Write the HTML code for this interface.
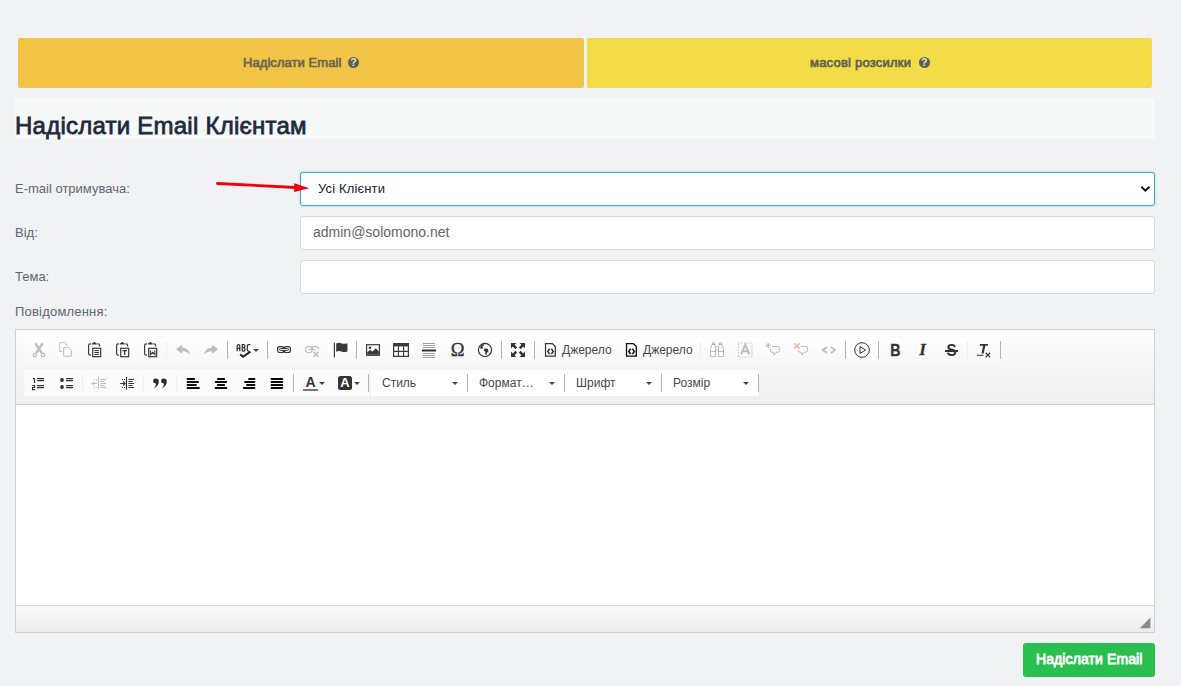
<!DOCTYPE html>
<html lang="uk">
<head>
<meta charset="utf-8">
<title>Надіслати Email Клієнтам</title>
<style>
*{box-sizing:border-box;margin:0;padding:0}
html,body{width:1181px;height:686px;overflow:hidden}
body{background:#f0f2f4;font-family:"Liberation Sans",sans-serif;position:relative;color:#5b6068}
.abs{position:absolute;white-space:nowrap}
.tab{position:absolute;top:38px;height:50px;border-radius:2px}
#tab1{left:18px;width:566px;background:#f1c445}
#tabgap{position:absolute;left:584px;top:38px;width:3px;height:50px;background:#f5f2e7}
#tab2{left:587px;width:565px;background:#f4dc49}
.tabtxt{font-size:13px;font-weight:normal;-webkit-text-stroke:0.7px #6b6850;letter-spacing:.06px;line-height:16px;color:#6b6850}
.qm{position:absolute;width:11px;height:11px}
#band{position:absolute;left:15px;top:98px;width:1140px;height:41px;background:#f7f9f9}
#h1{left:15px;top:111px;font-size:24px;line-height:30px;font-weight:normal;-webkit-text-stroke:0.8px #1f2a3c;letter-spacing:0.24px;color:#1f2a3c}
.lbl{font-size:13px;line-height:16px;color:#60666d}
.inp{position:absolute;left:300px;width:855px;height:34px;background:#fff;border:1px solid #d6d9db;border-radius:3px}
#sel{border:1px solid #3fb0c4;box-shadow:0 0 2px rgba(63,176,196,.6)}
#ed{position:absolute;left:15px;top:329px;width:1140px;height:304px;border:1px solid #cfd2d4;background:#fff}
#tb{position:absolute;left:0;top:0;width:1138px;height:75px;background:linear-gradient(#fdfdfd,#f6f6f6 45%,#efefef);border-bottom:1px solid #d3d3d3}
#bot{position:absolute;left:0;top:275px;width:1138px;height:27px;background:linear-gradient(#fbfbfb,#ececec);border-top:1px solid #d3d3d3}
#btn{position:absolute;left:1023px;top:643px;width:132px;height:34px;background:#2abf4e;border-radius:3px}
#btntxt{left:1036px;top:650px;font-size:14px;line-height:18px;font-weight:normal;-webkit-text-stroke:0.8px #fff;letter-spacing:.1px;color:#fff}

.grp{position:absolute;height:26px;background:rgba(255,255,255,.7)}
#g1{background:linear-gradient(rgba(255,255,255,.8),rgba(255,255,255,.15))}
.sd{position:absolute;width:1px;height:18px;background:#b3b3b3}
.sl{position:absolute;width:1px;height:18px;background:#f0f0f0}
.r1{top:341px}.r2{top:374px}
.ic{position:absolute;width:16px;height:16px;overflow:visible}
.i1{top:342px}.i2{top:375px}
.cb{font-size:12px;line-height:14px;color:#474747;top:376px}
.ar{position:absolute;width:0;height:0;border-left:3px solid transparent;border-right:3px solid transparent;border-top:3px solid #474747}
.dis{opacity:.3}
.qmark{width:11.200px;height:11.200px;border-radius:50%;font-size:10.500px;line-height:11px;text-align:center;font-weight:bold}
</style>
</head>
<body>
<div class="tab" id="tab1"></div>
<div id="tabgap"></div>
<div class="tab" id="tab2"></div>
<div class="abs tabtxt" id="t1" style="left:243px;top:55px">Надіслати Email</div>
<div class="abs tabtxt" id="t2" style="left:810px;top:55px;letter-spacing:.22px;color:#5f6450;-webkit-text-stroke-color:#5f6450">масові розсилки</div>

<div id="band"></div>
<div class="abs" id="h1">Надіслати Email Клієнтам</div>

<div class="abs lbl" id="l1" style="left:15px;top:181px">E-mail отримувача:</div>
<div class="abs lbl" id="l2" style="left:15px;top:225px">Від:</div>
<div class="abs lbl" id="l3" style="left:15px;top:269px">Тема:</div>
<div class="abs lbl" id="l4" style="left:15px;top:304px;letter-spacing:.2px">Повідомлення:</div>

<div class="inp" id="sel" style="top:172px"></div>
<div class="inp" id="in2" style="top:216px"></div>
<div class="inp" id="in3" style="top:260px"></div>
<div class="abs" id="seltxt" style="left:318px;top:181px;letter-spacing:.15px;font-size:13px;line-height:16px;color:#222">Усі Клієнти</div>
<div class="abs" id="fromtxt" style="left:313px;top:223px;font-size:14px;line-height:18px;color:#666">admin@solomono.net</div>

<div id="ed">
 <div id="tb"></div>
 <div id="bot"></div>
</div>


<div id="tbi">
<div class="grp" id="g1" style="left:24px;top:337px;width:977px"></div>
<div class="grp" style="left:24px;top:370px;width:345px"></div><div class="grp" style="left:371px;top:370px;width:388px;background:#fff"></div>
<!-- row 1 separators -->
<div class="sl r1" style="left:166px"></div>
<div class="sd r1" style="left:227px"></div>
<div class="sd r1" style="left:267px"></div>
<div class="sd r1" style="left:356px"></div>
<div class="sd r1" style="left:501px"></div>
<div class="sd r1" style="left:534px"></div>
<div class="sl r1" style="left:700px"></div>
<div class="sd r1" style="left:845px"></div>
<div class="sd r1" style="left:878px"></div>
<div class="sl r1" style="left:967px"></div>
<div class="sd r1" style="left:1000px"></div>
<!-- row 2 separators -->
<div class="sl r2" style="left:82px"></div>
<div class="sl r2" style="left:143px"></div>
<div class="sl r2" style="left:176px"></div>
<div class="sd r2" style="left:293px"></div>
<div class="sd r2" style="left:368px"></div>
<div class="sd r2" style="left:467px"></div>
<div class="sd r2" style="left:564px"></div>
<div class="sd r2" style="left:661px"></div>
<div class="sd r2" style="left:758px"></div>
<!-- labels -->
<div class="abs cb" id="src1" style="left:562px;top:343px">Джерело</div>
<div class="abs cb" id="src2" style="left:643px;top:343px">Джерело</div>
<div class="abs cb" id="c1" style="left:382px">Стиль</div>
<div class="abs cb" id="c2" style="left:479px">Формат…</div>
<div class="abs cb" id="c3" style="left:576px">Шрифт</div>
<div class="abs cb" id="c4" style="left:673px">Розмір</div>
<div class="ar" style="left:452px;top:382px"></div>
<div class="ar" style="left:549px;top:382px"></div>
<div class="ar" style="left:646px;top:382px"></div>
<div class="ar" style="left:743px;top:382px"></div>
<div class="ar" style="left:253px;top:349px"></div>
<div class="ar" style="left:319px;top:382px"></div>
<div class="ar" style="left:354px;top:382px"></div>
<!-- ICONS-BEGIN -->
<!-- row 1 -->
<svg class="ic i1 dis" style="left:31px" viewBox="0 0 16 16"><g fill="none" stroke="#333"><path d="M4.400 1.400L11 11.400M11.600 1.400L5 11.400" stroke-width="2.500"/><circle cx="3.900" cy="13" r="1.700" stroke-width="1.200"/><circle cx="12.100" cy="13" r="1.700" stroke-width="1.200"/></g></svg>
<svg class="ic i1 dis" style="left:59px" viewBox="0 0 16 16"><g fill="none" stroke="#333" stroke-width="1"><path d="M3.200 9.500H.700V.700H6L8.800 3.800"/><path d="M4.700 5.600H9.800L12.400 8.200V14.200H4.700Z"/></g></svg>
<svg class="ic i1" style="left:87px" viewBox="0 0 16 16"><g fill="none" stroke="#3a3a3a" stroke-width="1.2"><path d="M4 1.8H3.2Q1.6 1.8 1.6 3.4V11.6Q1.6 13.2 3.2 13.2H4"/><path d="M10.6 1.8H11.2Q12.6 1.8 12.6 3.4V4.6"/><rect x="5.7" y="6.3" width="8" height="8.4"/><path d="M7.4 8.6H12M7.4 10.5H12M7.4 12.4H12" stroke-width="1"/></g><path d="M4.8 2.6V1.6Q4.8 .9 5.8 .9H6Q6.3 0 7.3 0T8.6 .9H8.8Q9.8 .9 9.8 1.6V2.6Z" fill="#3a3a3a"/></svg>
<svg class="ic i1" style="left:115px" viewBox="0 0 16 16"><g fill="none" stroke="#3a3a3a" stroke-width="1.2"><path d="M4 1.8H3.2Q1.6 1.8 1.6 3.4V11.6Q1.6 13.2 3.2 13.2H4"/><path d="M10.6 1.8H11.2Q12.6 1.8 12.6 3.4V4.6"/><rect x="5.7" y="6.3" width="8" height="8.4"/><path d="M7.4 8.6H12M9.7 8.6V13" stroke-width="1.3"/></g><path d="M4.8 2.6V1.6Q4.8 .9 5.8 .9H6Q6.3 0 7.3 0T8.6 .9H8.8Q9.8 .9 9.8 1.6V2.6Z" fill="#3a3a3a"/></svg>
<svg class="ic i1" style="left:143px" viewBox="0 0 16 16"><g fill="none" stroke="#3a3a3a" stroke-width="1.2"><path d="M4 1.8H3.2Q1.6 1.8 1.6 3.4V11.6Q1.6 13.2 3.2 13.2H4"/><path d="M10.6 1.8H11.2Q12.6 1.8 12.6 3.4V4.6"/><rect x="5.7" y="6.3" width="8" height="8.4"/><path d="M7.5 8.3V12.7L9.7 10.4L11.9 12.7V8.3" stroke-width="1.1"/></g><path d="M4.8 2.6V1.6Q4.8 .9 5.8 .9H6Q6.3 0 7.3 0T8.6 .9H8.8Q9.8 .9 9.8 1.6V2.6Z" fill="#3a3a3a"/></svg>
<svg class="ic i1 dis" style="left:175px" viewBox="0 0 16 16"><path d="M1 7.2L7 2.8V5.6Q13.5 5.6 15 12.8Q12.2 9 7 9.2V11.8Z" fill="#333"/></svg>
<svg class="ic i1 dis" style="left:203px" viewBox="0 0 16 16"><path d="M15 7.2L9 2.8V5.6Q2.500 5.600 1 12.800Q3.800 9 9 9.200V11.800Z" fill="#333"/></svg>
<!-- spell -->
<svg class="ic i1" style="left:235px" viewBox="0 0 16 16"><g fill="none" stroke="#333" stroke-width="1.25"><path d="M2.200 9.200V4Q2.200 2.600 3.500 2.600T4.800 4V9.200M2.200 6.400H4.800"/><path d="M7.200 9.200V2.600H8.600Q9.900 2.600 9.900 4.100T8.600 5.700H7.200M8.600 5.700Q10.100 5.700 10.100 7.400T8.600 9.200H7.200"/><path d="M15.300 2.600H13.600Q12.300 2.600 12.300 4V7.800Q12.300 9.200 13.600 9.200H14"/></g><path d="M5.200 12.200L8 14.800L15.400 9.600" fill="none" stroke="#222" stroke-width="1.9"/></svg>
<!-- link, unlink, anchor -->
<svg class="ic i1" style="left:276px" viewBox="0 0 16 16"><g fill="none" stroke="#333" stroke-width="1.150"><rect x="1.550" y="4.550" width="6.500" height="5.900" rx="2.300"/><rect x="7.950" y="4.550" width="6.500" height="5.900" rx="2.300"/><rect x="3.500" y="6.550" width="9" height="1.900" rx=".950" fill="#fcfcfc" stroke-width="1"/></g></svg>
<svg class="ic i1 dis" style="left:304px" viewBox="0 0 16 16"><g fill="none" stroke="#333" stroke-width="1.150"><rect x="1.550" y="4.550" width="6.500" height="5.900" rx="2.300"/><path d="M8 8.800V6.850Q8 4.550 10.300 4.550H12.200Q14.500 4.550 14.500 6.850V7.600"/><path d="M4 7.500H10.800Q12.400 7.500 12.400 8.800" stroke-width="1"/><path d="M9.600 9.800L14.600 14.800M14.600 9.800L9.600 14.800" stroke-width="1.500"/></g></svg>
<svg class="ic i1" style="left:332px" viewBox="0 0 16 16"><path d="M2.400 .8V15.200" stroke="#3a3a3a" stroke-width="1.200"/><path d="M4.200 1.600Q6.500 .2 9.200 1.300T15.400 1.200V9.400Q12.400 10.700 9.400 9.600T4.200 9.900Z" fill="#3a3a3a"/></svg>
<!-- image table hr omega globe -->
<svg class="ic i1" style="left:365px" viewBox="0 0 16 16"><rect x="1.600" y="2.700" width="12.800" height="10.600" fill="none" stroke="#3a3a3a" stroke-width="1.200"/><circle cx="5" cy="5.800" r="1.300" fill="#3a3a3a"/><path d="M2.200 12.800V10.400L5.200 7.800L7.300 9.800L10.800 6.200L13.800 9.600V12.800Z" fill="#3a3a3a"/></svg>
<svg class="ic i1" style="left:393px" viewBox="0 0 16 16"><rect x=".6" y="1.6" width="14.8" height="12.8" fill="none" stroke="#3a3a3a" stroke-width="1.2"/><rect x="0" y="1" width="16" height="3.4" fill="#3a3a3a"/><path d="M5.4 4V14.400M10.6 4V14.400M0 9.400H16" stroke="#3a3a3a" stroke-width="1.1"/></svg>
<svg class="ic i1" style="left:421px" viewBox="0 0 16 16"><path d="M2 1.500H14M2 3.500H14M2 5.500H14M2 11.500H14M2 13.500H14M2 15.500H14" stroke="#a0a0a0" stroke-width="1"/><path d="M1 8.500H15" stroke="#333" stroke-width="2"/></svg>
<div class="abs" style="left:449px;top:338px;width:17px;text-align:center;font-family:'Liberation Serif','DejaVu Serif',serif;font-size:18.5px;line-height:24px;color:#333;font-weight:normal;-webkit-text-stroke:.35px #333">Ω</div>
<svg class="ic i1" style="left:477px" viewBox="0 0 16 16"><circle cx="8" cy="8" r="6.600" fill="none" stroke="#333" stroke-width="1.200"/><path d="M3.400 4.200Q5 2 7.600 2.200L6.800 3.800L5.200 4.200L6.400 5.400L4.800 6.800L3.200 6.400ZM7.400 6.600L10.800 6.800L11.600 9.200L9.800 11L9.600 13.600L8.200 11.800L8.400 9.800L6.800 8.400Z" fill="#333"/></svg>
<!-- maximize -->
<svg class="ic i1" style="left:510px" viewBox="0 0 16 16"><g fill="#333"><path d="M1 1H6.400L4.600 2.800L7.200 5.400L5.400 7.200L2.800 4.600L1 6.400Z"/><path d="M15 1V6.400L13.200 4.600L10.600 7.200L8.800 5.400L11.400 2.800L9.600 1Z"/><path d="M1 15V9.600L2.800 11.400L5.400 8.800L7.200 10.600L4.600 13.200L6.400 15Z"/><path d="M15 15H9.600L11.400 13.200L8.800 10.600L10.600 8.800L13.200 11.400L15 9.600Z"/></g></svg>
<!-- source x2 -->
<svg class="ic i1" style="left:543px" viewBox="0 0 16 16"><path d="M2.500 1.700H9.400L12.300 4.600V14.200H2.500Z" fill="none" stroke="#333" stroke-width="1.200"/><path d="M6.700 6.700L4.700 9.400L6.700 12.100M8.300 6.700L10.300 9.400L8.300 12.100" fill="none" stroke="#333" stroke-width="1.550"/></svg>
<svg class="ic i1" style="left:624px" viewBox="0 0 16 16"><path d="M2.500 1.700H9.400L12.300 4.600V14.200H2.500Z" fill="none" stroke="#111" stroke-width="1.300"/><path d="M6.700 6.700L4.700 9.400L6.700 12.100M8.300 6.700L10.300 9.400L8.300 12.100" fill="none" stroke="#111" stroke-width="1.550"/></svg>
<!-- disabled: find, selectall, comments, code -->
<svg class="ic i1 dis" style="left:709px" viewBox="0 0 16 16"><g fill="none" stroke="#333" stroke-width="1"><path d="M1.500 14.500V7L3 2.500H6L6.500 7V14.500ZM1.500 9.500H6.500M9.500 14.500V7L10 2.500H13L14.500 7V14.500ZM9.500 9.500H14.500M6.500 5H9.500M6.500 8H9.500M3.500 2.500V.8H5.500V2.500M10.500 2.500V.8H12.500V2.500"/></g></svg>
<svg class="ic i1 dis" style="left:737px" viewBox="0 0 16 16"><rect x="1.400" y="1" width="13.600" height="14" fill="none" stroke="#333" stroke-width="1.200" stroke-dasharray="1.200 1.600"/><path d="M4 12.400L8.200 2.800L12.400 12.400M5.600 9.200H10.800" fill="none" stroke="#333" stroke-width="2"/></svg>
<svg class="ic i1" style="left:765px;opacity:.4" viewBox="0 0 16 16"><path d="M3.200 1V6M.7 3.500H5.700" stroke="#3a9a3a" stroke-width="1.600"/><path d="M7 4.400H12.600Q14.600 4.400 14.600 6.200V8.400Q14.600 10.200 12.600 10.200H11L9 13.200L8.400 10.200H7Q5.400 10.200 5.400 8.400V7.200" fill="none" stroke="#555" stroke-width="1"/></svg>
<svg class="ic i1" style="left:793px;opacity:.4" viewBox="0 0 16 16"><path d="M1.200 1.200L6.600 6.600M6.600 1.200L1.200 6.600" stroke="#e0502a" stroke-width="1.500"/><path d="M8 4.400H12.600Q14.600 4.400 14.600 6.200V8.400Q14.600 10.200 12.600 10.200H11L9 13.200L8.400 10.200H7Q5.400 10.200 5.400 8.400V8" fill="none" stroke="#555" stroke-width="1"/></svg>
<svg class="ic i1 dis" style="left:821px" viewBox="0 0 16 16"><path d="M6 5L1.800 8L6 11M10 5L14.200 8L10 11" fill="none" stroke="#333" stroke-width="1.700"/></svg>
<!-- play -->
<svg class="ic i1" style="left:854px" viewBox="0 0 16 16"><circle cx="8" cy="8" r="7.300" fill="none" stroke="#333" stroke-width="1"/><path d="M6 4.600L11.600 8L6 11.400Z" fill="none" stroke="#333" stroke-width="1" stroke-linejoin="round"/></svg>
<!-- B I S Tx -->
<div class="abs" style="left:887px;top:340px;width:17px;text-align:center;font-size:16.500px;line-height:20px;color:#333;font-weight:bold;transform:scaleX(.86);-webkit-text-stroke:.3px #333">B</div>
<div class="abs" style="left:914px;top:340px;width:17px;text-align:center;font-family:'Liberation Serif',serif;font-size:17px;line-height:20px;color:#333;font-weight:bold;font-style:italic;-webkit-text-stroke:.3px #333">I</div>
<div class="abs" style="left:943px;top:340px;width:17px;text-align:center;font-size:16.500px;line-height:20px;color:#333;font-weight:bold;transform:scaleX(.92)">S</div>
<div style="position:absolute;left:945px;top:350px;width:13px;height:1.500px;background:#333"></div>
<svg class="ic i1" style="left:976px" viewBox="0 0 16 16"><path d="M4 2.100H12L11.700 3.700H9.300L7.700 11.400H5.500L7.100 3.700H3.700Z" fill="#333"/><path d="M1 13.300H7.400" stroke="#333" stroke-width="1"/><path d="M9.600 10.800L14.200 15.400M14.200 10.800L9.600 15.400" stroke="#333" stroke-width="1.250"/></svg>
<!-- row 2 -->
<svg class="ic i2" style="left:30px" viewBox="0 0 16 16"><g fill="none" stroke="#333" stroke-width="1.1"><path d="M2.8 3.6H4.5V7.9"/><path d="M2.2 10.5H4.6V12.5H2.5V14.6H5"/><path d="M7.1 3.6H14M7.1 5.6H14M7.1 10.6H14M7.1 12.6H14"/></g></svg>
<svg class="ic i2" style="left:58px" viewBox="0 0 16 16"><circle cx="4" cy="5" r="1.9" fill="#333"/><circle cx="4" cy="12" r="1.9" fill="#333"/><path d="M8.1 3.6H14.9M8.1 5.6H14.9M8.1 10.6H14.9M8.1 12.6H14.9" stroke="#333" stroke-width="1.1"/></svg>
<svg class="ic i2 dis" style="left:91px" viewBox="0 0 16 16"><g fill="none" stroke="#333" stroke-width="1"><path d="M7.500 2V14.700"/><path d="M9.400 4.500H15M9.400 6.500H13.600M9.400 8.500H15M9.400 10.500H13.600M9.400 12.500H15"/><path d="M1.200 8.500H6.200M3.200 6.500L1.200 8.500L3.200 10.500"/><path d="M3 4.500H4M5 4.500H6M3 12.500H4M5 12.500H6"/></g></svg>
<svg class="ic i2" style="left:119px" viewBox="0 0 16 16"><g fill="none" stroke="#333" stroke-width="1"><path d="M7.500 2V14.700" stroke-width="1.200"/><path d="M9.400 4.500H15M9.400 6.500H13.600M9.400 8.500H15M9.400 10.500H13.600M9.400 12.500H15"/><path d="M1.200 8.500H6.200M4.200 6.500L6.200 8.500L4.200 10.500" stroke-width="1.100"/><path d="M3 4.500H4M5 4.500H6M3 12.500H4M5 12.500H6"/></g></svg>
<svg class="ic i2" style="left:152px" viewBox="0 0 16 16"><g fill="#2a2a2a"><path d="M1.200 5.900Q1.200 3.600 3.800 3.600Q6.800 3.600 6.800 6.800Q6.800 10.600 1.800 13.800Q4.200 10.800 4 8.400Q1.200 8.400 1.200 5.900Z"/><path d="M9.200 5.900Q9.200 3.600 11.800 3.600Q14.800 3.600 14.800 6.800Q14.800 10.600 9.800 13.800Q12.200 10.800 12 8.400Q9.200 8.400 9.200 5.900Z"/></g></svg>
<svg class="ic i2" style="left:185px" viewBox="0 0 16 16"><path d="M2.500 4H9.200M2.500 7H13M2.500 10H11M2.500 13H14" stroke="#0a0a0a" stroke-width="1.850" stroke-linecap="round"/></svg>
<svg class="ic i2" style="left:213px" viewBox="0 0 16 16"><path d="M4.800 4H11.200M2.700 7H13.300M4.800 10H11.200M2.500 13H13.500" stroke="#0a0a0a" stroke-width="1.850" stroke-linecap="round"/></svg>
<svg class="ic i2" style="left:241px" viewBox="0 0 16 16"><path d="M8 4H13.500M4 7H13.500M6 10H13.500M2.800 13H13.500" stroke="#0a0a0a" stroke-width="1.850" stroke-linecap="round"/></svg>
<svg class="ic i2" style="left:269px" viewBox="0 0 16 16"><path d="M2.500 4H13.300M2.500 7H13.300M2.500 10H13.300M2.500 13H13.300" stroke="#0a0a0a" stroke-width="1.850" stroke-linecap="round"/></svg>
<!-- text color / bg color -->
<div class="abs" style="left:302px;top:373px;width:17px;text-align:center;font-size:14px;line-height:18px;color:#333;font-weight:bold">A</div>
<div style="position:absolute;left:303px;top:389px;width:15px;height:1.500px;background:#757575"></div>
<div style="position:absolute;left:338px;top:376px;width:14px;height:14px;border-radius:2.500px;background:#333"></div>
<div class="abs" style="left:338px;top:374px;width:14px;text-align:center;font-size:13px;line-height:18px;color:#fff;font-weight:bold">A</div>
<!-- ICONS-END -->
</div>


<svg class="abs" style="left:0;top:0;width:1181px;height:686px;pointer-events:none" viewBox="0 0 1181 686">
<path d="M217.400 183.500L296 187.500" stroke="#f00010" stroke-width="2.800" stroke-linecap="round"/>
<path d="M294.300 183.300L309.300 188.300L294.100 192.100Z" fill="#f00010"/>
<path d="M1141.400 186.700L1145.400 190.700L1149.400 186.700" fill="none" stroke="#111" stroke-width="2"/>
<path d="M1150.400 617.600V628.200H1139.800Z" fill="#8a8a8a"/>
</svg>
<div class="abs qmark" style="left:347.800px;top:56.600px;background:#56605e;color:#f7e3a0">?</div>
<div class="abs qmark" style="left:918.500px;top:56.600px;background:#56605e;color:#f8eda0">?</div>
<div id="btn"></div>
<div class="abs" id="btntxt">Надіслати Email</div>
</body>
</html>
